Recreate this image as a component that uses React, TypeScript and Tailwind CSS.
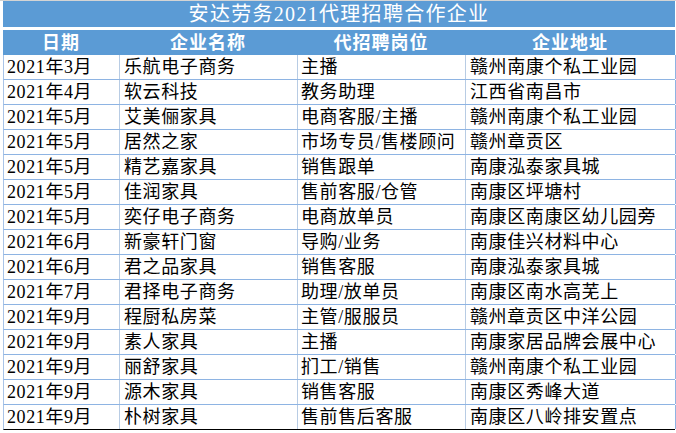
import React from "react";

const rows: [string, string, string, string][] = [
  ["2021年3月", "乐航电子商务", "主播", "赣州南康个私工业园"],
  ["2021年4月", "软云科技", "教务助理", "江西省南昌市"],
  ["2021年5月", "艾美俪家具", "电商客服/主播", "赣州南康个私工业园"],
  ["2021年5月", "居然之家", "市场专员/售楼顾问", "赣州章贡区"],
  ["2021年5月", "精艺嘉家具", "销售跟单", "南康泓泰家具城"],
  ["2021年5月", "佳润家具", "售前客服/仓管", "南康区坪塘村"],
  ["2021年5月", "奕仔电子商务", "电商放单员", "南康区南康区幼儿园旁"],
  ["2021年6月", "新豪轩门窗", "导购/业务", "南康佳兴材料中心"],
  ["2021年6月", "君之品家具", "销售客服", "南康泓泰家具城"],
  ["2021年7月", "君择电子商务", "助理/放单员", "南康区南水高芜上"],
  ["2021年9月", "程厨私房菜", "主管/服服员", "赣州章贡区中洋公园"],
  ["2021年9月", "素人家具", "主播", "南康家居品牌会展中心"],
  ["2021年9月", "丽舒家具", "扪工/销售", "赣州南康个私工业园"],
  ["2021年9月", "源木家具", "销售客服", "南康区秀峰大道"],
  ["2021年9月", "朴树家具", "售前售后客服", "南康区八岭排安置点"],
];

const font = {
  fontFamily: '"Liberation Serif", "Noto Sans CJK SC", serif',
};

export default function App() {
  return (
    <div
      className="w-[676px] h-[433px] bg-white overflow-hidden border-t border-[#d4d4d4]"
      style={font}
    >
      <div className="ml-[3px] w-[672px]">
        <div className="h-[26px] bg-[#5b9bd5] flex items-center justify-center text-white text-[20px] leading-none tracking-[1.3px]">
          安达劳务2021代理招聘合作企业
        </div>
        <div className="h-[3px] bg-white" />
        <div className="h-[25px] bg-[#5b9bd5] grid grid-cols-[116px_178px_168px_210px] text-white font-bold text-[18px] leading-none items-center tracking-[1px]">
          <div className="text-center">日期</div>
          <div className="text-center">企业名称</div>
          <div className="text-center">代招聘岗位</div>
          <div className="text-center">企业地址</div>
        </div>
        {rows.map((r, i) => (
          <div
            key={i}
            className={`h-[25px] grid grid-cols-[116px_178px_168px_210px] border-l border-[#a9c4e8] text-black text-[18px] leading-none tracking-[0.6px] border-b ${
              i === rows.length - 1 ? "border-b-black" : "border-b-[#8eb4e3]"
            }`}
          >
            <div className="border-r border-[#b8cce4] flex items-center pl-[3px] whitespace-nowrap">
              {r[0]}
            </div>
            <div className="border-r border-[#b8cce4] flex items-center pl-[4px] whitespace-nowrap">
              {r[1]}
            </div>
            <div className="border-r border-[#b8cce4] flex items-center pl-[3px] whitespace-nowrap overflow-hidden">
              {r[2]}
            </div>
            <div className="border-r border-[#8eb4e3] flex items-center pl-[4px] whitespace-nowrap overflow-hidden">
              {r[3]}
            </div>
          </div>
        ))}
      </div>
    </div>
  );
}
